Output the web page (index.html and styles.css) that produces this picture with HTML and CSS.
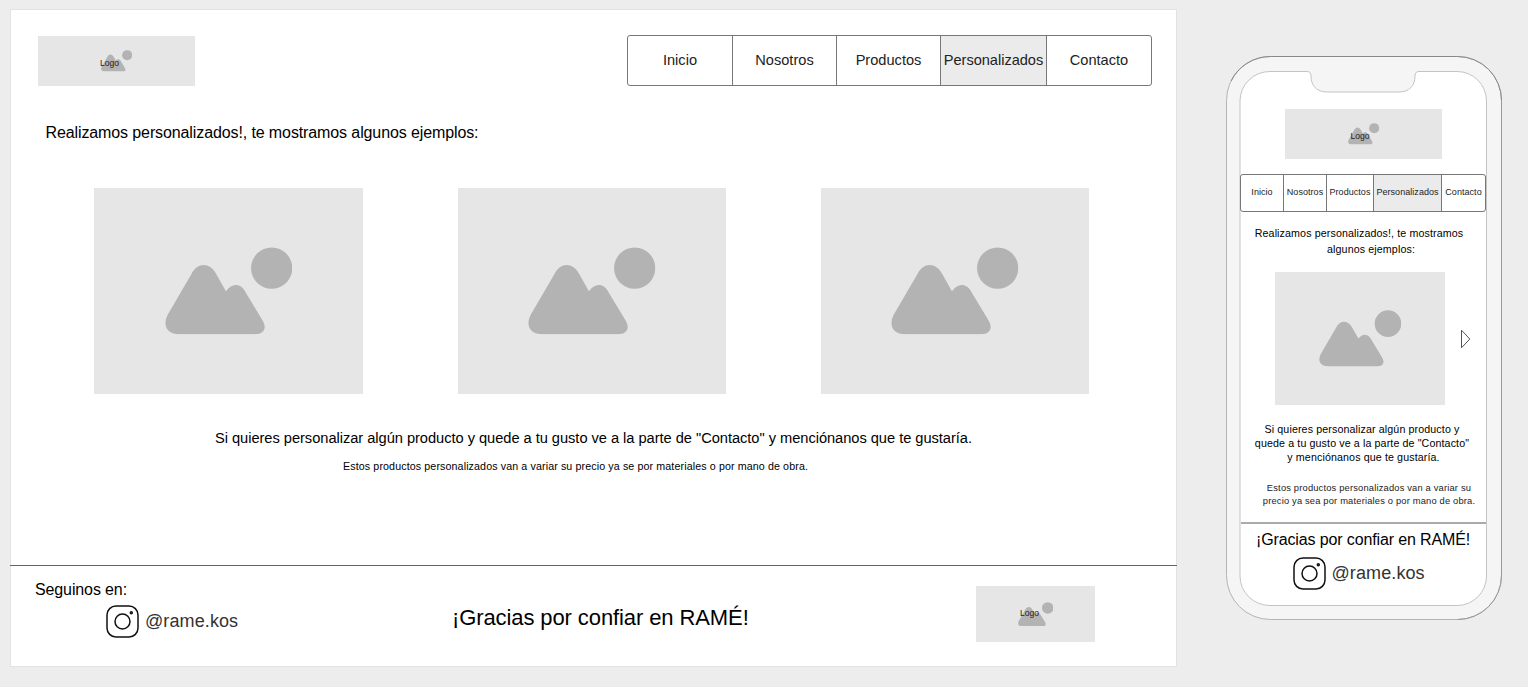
FILE: index.html
```html
<!DOCTYPE html>
<html lang="es">
<head>
<meta charset="utf-8">
<title>RAMÉ – Personalizados</title>
<link rel="stylesheet" href="styles.css">
</head>
<body>
<svg class="defs" width="0" height="0">
  <symbol id="picture" viewBox="254 200 383 263">
    <path d="M262 404 L333 282 C351 246 388 245 407 280 L437 333 C456 307 482 309 496 336 L545 417 C563 444 551 462 524 462 H298 C259 462 246 436 262 404Z"/>
    <circle cx="574.5" cy="263.5" r="62"/>
  </symbol>
  <symbol id="instagram" viewBox="0 0 33 33">
    <rect x="1" y="1" width="31" height="31" rx="9"/>
    <circle cx="16.5" cy="16.5" r="7.5"/>
    <circle class="dot" cx="25.3" cy="7.7" r="1"/>
  </symbol>
</svg>

<main class="board">
  <header class="top">
    <div class="pic logo"><svg><use href="#picture"/></svg><span class="logo-text">Logo</span></div>
    <nav class="tabs">
      <a>Inicio</a><a>Nosotros</a><a>Productos</a><a class="active">Personalizados</a><a>Contacto</a>
    </nav>
  </header>
  <h1 class="title">Realizamos personalizados!, te mostramos algunos ejemplos:</h1>
  <section class="gallery">
    <div class="pic"><svg><use href="#picture"/></svg></div>
    <div class="pic"><svg><use href="#picture"/></svg></div>
    <div class="pic"><svg><use href="#picture"/></svg></div>
  </section>
  <p class="lead">Si quieres personalizar algún producto y quede a tu gusto ve a la parte de "Contacto" y menciónanos que te gustaría.</p>
  <p class="note">Estos productos personalizados van a variar su precio ya se por materiales o por mano de obra.</p>
  <footer class="bottom">
    <div class="follow">
      <span class="follow-label">Seguinos en:</span>
      <div class="social"><svg><use href="#instagram"/></svg><span>@rame.kos</span></div>
    </div>
    <span class="thanks">¡Gracias por confiar en RAMÉ!</span>
    <div class="pic logo"><svg><use href="#picture"/></svg><span class="logo-text">Logo</span></div>
  </footer>
</main>

<aside class="phone">
  <svg class="shell" viewBox="0 0 276 564">
    <rect class="case" x=".5" y=".5" width="275" height="563" rx="44"/>
    <path class="rim" d="M5 25 A44 44 0 0 1 44.5 .5 H231.5 A44 44 0 0 1 275.500 44.5"/>
    <path class="side" d="M275.5 44.5 V519.5 A44 44 0 0 1 231.5 563.5"/>
    <path class="glass" d="M44 15.500 H81 Q85 15.500 85 20 C85 30 91 36 101 36 H173 C183 36 189 30 189 20 Q189 15.500 193 15.500 H231 A29.500 29.500 0 0 1 260.500 45 V520 A29.500 29.500 0 0 1 231 549.500 H44 A30 29.500 0 0 1 14 520 V45 A30 29.500 0 0 1 44 15.500Z"/>
  </svg>
  <div class="screen">
    <div class="pic logo"><svg><use href="#picture"/></svg><span class="logo-text">Logo</span></div>
    <nav class="tabs">
      <a>Inicio</a><a>Nosotros</a><a>Productos</a><a class="active">Personalizados</a><a>Contacto</a>
    </nav>
    <h2 class="title">Realizamos personalizados!, te mostramos<br><span class="second">algunos ejemplos:</span></h2>
    <div class="carousel">
      <div class="pic"><svg><use href="#picture"/></svg></div>
      <svg class="next" viewBox="0 0 11 20"><path d="M1.500 1.200 V18.800 L9.800 10Z"/></svg>
    </div>
    <p class="lead">Si quieres personalizar algún producto y<br>quede a tu gusto ve a la parte de "Contacto"<br><span class="last">y menciónanos que te gustaría.</span></p>
    <p class="note">Estos productos personalizados van a variar su<br>precio ya sea por materiales o por mano de obra.</p>
    <footer class="ending">
      <span class="thanks">¡Gracias por confiar en RAMÉ!</span>
      <div class="social"><svg><use href="#instagram"/></svg><span>@rame.kos</span></div>
    </footer>
  </div>
</aside>
</body>
</html>
```
FILE: styles.css
```css
* { box-sizing: border-box; }
body {
  margin: 0;
  width: 1528px;
  height: 687px;
  overflow: hidden;
  display: flex;
  align-items: flex-start;
  background: #ededed;
  color: #000;
  font-family: "Liberation Sans", Arial, sans-serif;
  white-space: nowrap;
}
.defs { position: absolute; }
h1, h2, p { margin: 0; font-weight: 400; }

.board {
  width: 1167px;
  height: 658px;
  margin: 9px 0 0 10px;
  display: flex;
  flex-direction: column;
  background: #fff;
  border: 1px solid #e2e2e2;
}

.pic {
  display: flex;
  align-items: center;
  justify-content: center;
  flex: none;
  background: #e6e6e6;
}
.pic svg { width: 127.5px; height: 87.5px; fill: #b3b3b3; }
.logo { position: relative; width: 157px; height: 50px; }
.logo svg { width: 31.3px; height: 21.5px; }
.logo-text {
  position: absolute;
  left: 62px;
  top: 21px;
  font-size: 8.6px;
  line-height: 12px;
  color: #222;
}

.tabs {
  display: flex;
  border: 1px solid #777;
  border-radius: 3px;
  overflow: hidden;
  color: #222;
}
.tabs a {
  display: flex;
  align-items: center;
  justify-content: center;
  flex: none;
}
.tabs a + a { border-left: 1px solid #777; }
.tabs .active { background: #ebebeb; }

.top {
  height: 77px;
  padding: 25px 24px 0 27px;
  display: flex;
  justify-content: space-between;
  align-items: flex-start;
}
.top .logo { margin-top: 1px; }
.top .tabs { width: 525px; height: 51px; font-size: 14.6px; }
.top .tabs a { width: 104px; padding-bottom: 1px; }
.top .tabs a:nth-child(3) { width: 104px; }
.top .tabs a:nth-child(4) { width: 106px; letter-spacing: -0.03px; }
.top .tabs a:nth-child(5) { width: 105px; }

.title { font-size: 16px; line-height: 20px; }
.board .title { margin: 36px 0 0 34.5px; letter-spacing: -0.11px; }

.gallery {
  margin-top: 45px;
  padding-left: 83.3px;
  display: flex;
  gap: 95.1px;
}
.gallery .pic { width: 268.3px; height: 205.5px; }

.board .lead {
  margin: 34px 0 0 204px;
  font-size: 14.67px;
  line-height: 20px;
  letter-spacing: -0.04px;
}
.board .note {
  margin: 10px 0 0 332px;
  font-size: 10.67px;
  line-height: 16px;
  letter-spacing: 0.12px;
}

.bottom {
  margin-top: auto;
  height: 101px;
  border-top: 1px solid #666;
  display: flex;
  align-items: flex-start;
  /* the rule runs over the frame's side borders */
  margin-left: -1px;
  margin-right: -1px;
}
.follow { width: 442px; padding: 14px 0 0 25px; }
.follow-label { display: block; font-size: 16px; line-height: 20px; letter-spacing: -0.12px; }
.social {
  display: flex;
  align-items: center;
  gap: 6px;
  font-size: 18px;
  letter-spacing: 0.1px;
  color: #333;
}
.social svg { width: 33px; height: 33px; fill: none; stroke: #111; stroke-width: 1.5px; }
.social span { padding-top: 1px; }
.follow .social { margin: 4px 0 0 71px; }
.follow .social svg, .ending .social svg { margin-top: 1px; }
.bottom .thanks { width: 524px; padding-top: 38px; font-size: 22px; line-height: 28px; letter-spacing: -0.1px; }
.bottom .logo { width: 118.5px; height: 56.5px; margin-top: 19.5px; }
.bottom .logo svg { width: 35.5px; height: 24.4px; }
.bottom .logo-text { left: 44px; }

.phone {
  position: relative;
  width: 276px;
  height: 564px;
  margin: 56px 0 0 49px;
}
.shell { position: absolute; inset: 0; width: 276px; height: 564px; overflow: visible; }
.case { fill: #f5f5f5; stroke: #b4b4b4; }
.rim { fill: none; stroke: #888; }
.side { fill: none; stroke: #999; }
.glass { fill: #fff; stroke: #c4c4c4; }
.screen {
  position: relative;
  padding: 53px 16px 0 14px;
  display: flex;
  flex-direction: column;
}
.screen .logo { margin-left: 44.5px; width: 157.5px; }
.screen .logo-text { left: 66px; }
.screen .tabs { width: 246px; height: 38px; margin-top: 15px; font-size: 9px; letter-spacing: 0.05px; }
.screen .tabs a { padding-bottom: 3px; }
.screen .tabs a:nth-child(1) { width: 42px; }
.screen .tabs a:nth-child(2) { width: 43px; }
.screen .tabs a:nth-child(3) { width: 47px; }
.screen .tabs a:nth-child(4) { width: 68px; }
.screen .tabs a:nth-child(5) { width: 44px; }
.screen .title {
  width: 238px;
  margin-top: 13px;
  font-size: 10.67px;
  line-height: 16px;
  letter-spacing: 0.12px;
  text-align: center;
}
.second { margin-left: 24px; }
.carousel { display: flex; align-items: center; margin: 15px 0 0 34.5px; }
.carousel .pic { width: 170.5px; height: 133px; }
.carousel .pic svg { width: 82.5px; height: 56.6px; }
.carousel .next { width: 11px; height: 20px; margin-left: 15px; fill: none; stroke: #555; }
.screen .lead {
  width: 244px;
  margin-top: 17px;
  font-size: 10.67px;
  line-height: 14px;
  letter-spacing: 0.12px;
  text-align: center;
}
.last { margin-left: 3px; }
.screen .note {
  width: 258px;
  margin-top: 18px;
  font-size: 9.33px;
  line-height: 13px;
  letter-spacing: 0.18px;
  text-align: center;
  color: #222;
}
.ending {
  width: 245px;
  margin: 14px 0 0 1px;
  border-top: 2px solid #aaa;
}
.ending .thanks {
  display: block;
  padding: 6px 0 0 15px;
  font-size: 16px;
  line-height: 20px;
  letter-spacing: -0.13px;
}
.ending .social { margin: 6px 0 0 51.5px; }
```
